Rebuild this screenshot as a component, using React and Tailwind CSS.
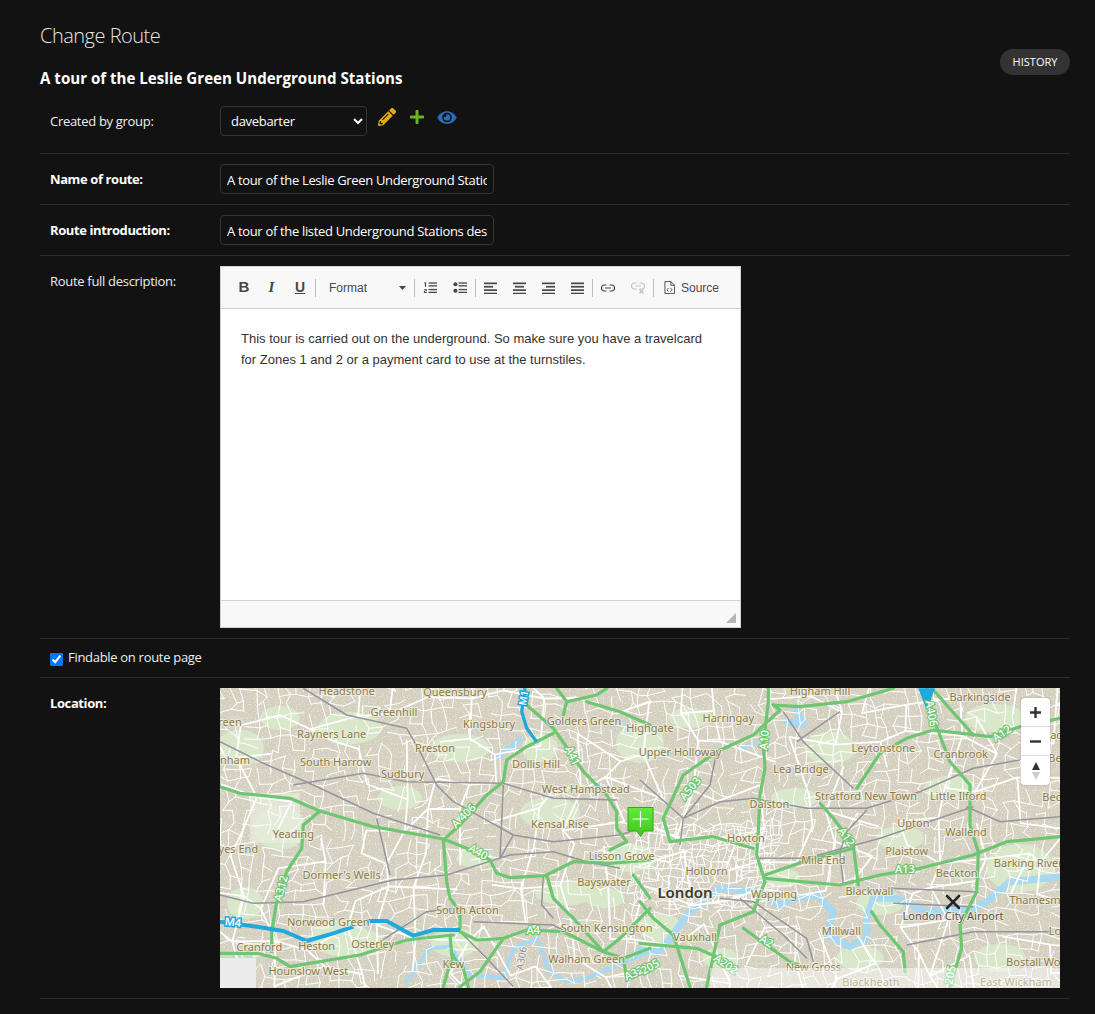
import { FaEye, FaPencilAlt, FaPlus } from "react-icons/fa";

const SANS = "font-['Open_Sans','Noto_Sans',sans-serif]";

// map points are measured in 3x crops, these bring them back to map pixels
const z3 = (pts) => pts.map(([x, y]) => `${(x / 3).toFixed(1)},${(y / 3 - 3).toFixed(1)}`).join(" ");
const z4 = (pts) => pts.map(([x, y]) => `${(x / 3 + 420).toFixed(1)},${(y / 3 - 3).toFixed(1)}`).join(" ");

const greenRoads = [
  z3([[0,305],[60,325],[210,340],[300,378],[460,425],[670,462],[740,490],[810,525],[830,565],[870,578],[975,572],[1060,530],[1170,535],[1290,525]]),
  z3([[300,378],[250,420],[245,490],[200,560],[170,650],[155,740],[155,800]]),
  z3([[1000,145],[920,185],[860,225],[850,290],[800,330],[720,420],[670,465],[680,590],[690,640],[720,680],[720,730]]),
  z3([[920,60],[1000,130],[1050,200],[1090,260],[1160,330],[1190,380],[1190,430],[1220,470],[1170,495]]),
  z3([[1010,10],[1040,50],[1130,30],[1160,10]]),
  z3([[1040,50],[1030,90]]),
  z3([[1100,50],[1200,80],[1290,120]]),
  z3([[720,740],[770,765],[850,760],[920,735],[1030,740],[1150,800],[1210,820]]),
  z3([[0,805],[110,805],[170,820],[210,845],[300,830],[420,810],[560,765],[700,750]]),
  z3([[690,750],[695,810],[730,850],[745,905]]),
  z3([[700,810],[680,870],[670,905]]),
  z3([[850,760],[780,860],[720,905]]),
  z3([[980,570],[1000,640],[1060,700],[1150,800],[1200,760],[1290,670]]),
  z3([[1240,570],[1290,640]]),
  z3([[1290,790],[1210,820],[1220,880],[1290,850]]),
  z4([[385,10],[385,50],[370,180],[375,250],[360,330],[355,440],[350,510],[375,590]]),
  z4([[400,60],[480,65],[620,50],[760,10]]),
  z4([[400,60],[420,75],[340,150],[230,200],[130,270],[70,400],[90,470],[220,455],[340,490]]),
  z4([[1260,100],[1140,125],[1050,155],[880,135],[800,160],[720,205],[650,310]]),
  z4([[860,10],[880,100],[930,230],[990,300],[990,420],[1015,500],[1010,620],[960,720],[965,790],[930,905]]),
  z4([[880,15],[1000,150]]),
  z4([[375,580],[600,600],[720,570],[840,550],[1000,510],[1100,470],[1260,455]]),
  z4([[540,355],[580,400],[640,480],[655,600]]),
  z4([[640,490],[490,530],[375,570]]),
  z4([[240,720],[340,680],[375,590]]),
  z4([[310,730],[450,830],[500,850]]),
  z4([[240,720],[200,905]]),
  z4([[0,650],[40,700],[100,750],[150,905]]),
  z4([[0,775],[170,790],[240,820]]),
  z4([[695,680],[720,720],[790,800],[795,860]]),
];

const railLines = [
  z3([[0,170],[120,230],[280,300],[460,385],[660,450]]),
  z3([[250,10],[380,90],[560,130],[600,200],[650,300],[700,350],[880,450]]),
  z3([[0,630],[100,655],[250,650],[520,585],[680,570],[870,510],[1000,500],[1100,530],[1200,550]]),
  z3([[220,300],[430,265],[560,290],[850,295],[1000,340],[1190,345]]),
  z3([[470,400],[510,570]]),
  z3([[880,450],[840,520],[850,300]]),
  z3([[480,770],[620,680],[700,670]]),
  z3([[720,740],[800,820],[880,905]]),
  z3([[760,710],[1000,720],[1150,800]]),
  z3([[970,570],[965,660],[1000,700]]),
  z3([[880,450],[1000,470],[1200,450],[1290,420]]),
  z4([[0,285],[130,400],[240,350],[340,340],[500,370],[680,370],[840,320],[1000,250],[1140,225]]),
  z4([[680,375],[620,440],[600,500],[610,600]]),
  z4([[980,365],[1080,410],[1260,395]]),
  z4([[1000,365],[720,460],[500,520],[350,520]]),
  z4([[430,80],[490,170],[640,310]]),
  z4([[470,170],[600,80]]),
  z4([[230,200],[210,300],[130,400],[120,480]]),
  z4([[240,640],[340,650],[500,760],[520,830]]),
  z4([[750,610],[1010,620]]),
  z4([[760,655],[1000,665]]),
  z4([[800,780],[1000,740],[1230,740]]),
  z4([[300,640],[430,750],[500,820]]),
];

const water = [
  [z4([[1270,575],[1110,590],[1040,650],[1000,672],[860,682],[770,640],[700,640],[680,700],[680,760],[630,785],[560,750],[580,680],[530,630],[470,640],[420,660],[340,620],[240,610],[150,680],[60,800],[0,795]]), 7],
  [z3([[1290,800],[1100,880],[1040,890],[990,860],[950,760],[880,790],[850,880],[750,870],[690,785],[630,790],[560,890]]), 4],
  [z3([[835,215],[900,165]]), 6],
  [z4([[440,110],[490,120],[470,75]]), 7],
  [z4([[310,190],[350,170]]), 4],
];

const parks = [
  [410, 170, 26, 14], [330, 125, 30, 16], [240, 60, 30, 14], [130, 40, 32, 16], [60, 140, 26, 22],
  [120, 250, 30, 18], [420, 55, 24, 20], [345, 205, 30, 12], [610, 60, 26, 16], [680, 150, 24, 12],
  [800, 180, 34, 24], [775, 30, 30, 14], [235, 255, 24, 14], [440, 240, 22, 14], [660, 215, 24, 12],
  [385, 210, 20, 10], [145, 255, 22, 12], [20, 60, 24, 18], [575, 110, 24, 10], [500, 270, 18, 10],
  [180, 110, 22, 12], [255, 170, 18, 10], [60, 30, 20, 12], [560, 190, 20, 10], [730, 100, 26, 12],
  [25, 215, 18, 16], [320, 60, 18, 14], [470, 30, 22, 10], [640, 270, 24, 12], [780, 270, 26, 14],
];

const places = [
  ...[
    ["Headstone",380,18],["Queensbury",705,22],["Greenhill",522,80],["Kingsbury",807,118],["Golders Green",1092,108],
    ["reen",30,110],["Rayners Lane",335,148],["Preston",645,188],["Dollis Hill",948,236],["nham",45,226],
    ["South Harrow",347,232],["Sudbury",548,266],["West Hampstead",1097,312],["Kensal Rise",1020,418],["Yeading",220,446],
    ["yes End",55,492],["Lisson Grove",1205,512],["Dormer's Wells",365,570],["Bayswater",1152,590],["South Acton",742,676],
    ["Norwood Green",325,712],["South Kensington",1160,728],["Cranford",118,785],["Heston",290,782],["Osterley",458,778],
    ["Kew",700,836],["Walham Green",1100,822],["Hounslow West",265,858],
  ].map(([t, x, y]) => [t, x / 3, y / 3 - 3]),
  ...[
    ["Higham Hill",540,18],["Barkingside",1020,36],["Harringay",265,100],["Highgate",30,130],["Upper Holloway",120,200],
    ["Leytonstone",730,188],["Cranbrook",962,207],["Lea Bridge",483,253],["Stratford New Town",678,332],["Little Ilford",955,333],
    ["Dalston",388,358],["Upton",820,413],["Wallend",978,441],["Hoxton",318,459],["Plaistow",800,497],["Barking River",1165,535],
    ["Mile End",550,524],["Holborn",200,557],["Beckton",950,565],["Blackwall",688,617],["Wapping",402,626],["Thamesm",1185,646],
    ["Vauxhall",165,756],["Millwall",604,738],["Lo",1245,738],["Bostall Wo",1180,830],["New Gross",520,846],
    ["Blackheath",693,892],["East Wickham",1128,890],["Bec",1235,335],["Be",1245,218],["ad",1250,150],
  ].map(([t, x, y]) => [t, x / 3 + 420, y / 3 - 3]),
];

const shields = [
  ["A 406",730,392,-45,0],["A40",775,500,30,0],["A312",182,610,-75,0],["A41",1058,212,65,0],["A4",940,735,0,0],["A320",1250,860,-25,0],
  ["A10",372,165,-85,1],["A503",150,310,-50,1],["A406",875,85,80,1],["A12",1085,145,-35,1],["A12",620,455,55,1],["A13",795,553,0,1],
  ["A2",380,768,30,1],["A202",258,837,35,1],["205",30,845,-30,1],["205",930,870,-80,1],
].map(([t, x, y, r, right]) => [t, right ? x / 3 + 420 : x / 3, y / 3 - 3, r]);

// fake street mesh: a wobbly grid with some edges dropped, seeded so every load is the same
function makeStreets() {
  let seed = 20240611;
  const rnd = () => {
    seed = (seed + 0x6d2b79f5) | 0;
    let t = Math.imul(seed ^ (seed >>> 15), 1 | seed);
    t = (t + Math.imul(t ^ (t >>> 7), 61 | t)) ^ t;
    return ((t ^ (t >>> 14)) >>> 0) / 4294967296;
  };
  const mesh = (x0, y0, cols, rows, cell, keep) => {
    const pts = [];
    for (let r = 0; r <= rows; r++) {
      for (let c = 0; c <= cols; c++) {
        const bx = x0 + c * cell;
        const by = y0 + r * cell;
        pts.push([
          bx + Math.sin(by / 47) * 6 + (rnd() - 0.5) * cell * 0.75,
          by + Math.sin(bx / 61) * 6 + (rnd() - 0.5) * cell * 0.75,
        ]);
      }
    }
    let d = "";
    const w = cols + 1;
    const seg = (a, b) => {
      d += `M${a[0].toFixed(1)} ${a[1].toFixed(1)}L${b[0].toFixed(1)} ${b[1].toFixed(1)}`;
    };
    for (let r = 0; r <= rows; r++) {
      for (let c = 0; c <= cols; c++) {
        const p = pts[r * w + c];
        if (c < cols && rnd() < keep) seg(p, pts[r * w + c + 1]);
        if (r < rows && rnd() < keep) seg(p, pts[(r + 1) * w + c]);
      }
    }
    return d;
  };
  return {
    main: mesh(-15, -15, 24, 9, 37, 0.55),
    wide: mesh(-10, -10, 79, 29, 11, 0.58),
    inner: mesh(415, 130, 22, 13, 6.5, 0.72),
  };
}
const streets = makeStreets();

function MapDrawing() {
  return (
    <svg width="840" height="300" viewBox="0 0 840 300" className="block" fontFamily="'Noto Sans',sans-serif">
      <defs>
        <filter id="speckle" x="0" y="0" width="100%" height="100%">
          <feTurbulence type="fractalNoise" baseFrequency="0.85" numOctaves="1" seed="4" />
          <feColorMatrix values="0 0 0 0 1  0 0 0 0 1  0 0 0 0 1  3.2 0 0 0 -1.7" />
        </filter>
        <linearGradient id="pinFill" x1="0" y1="0" x2="0" y2="1">
          <stop offset="0" stopColor="#62ea3c" />
          <stop offset="1" stopColor="#3fc61f" />
        </linearGradient>
      </defs>
      <rect width="840" height="300" fill="#d4cfbe" />
      <rect width="840" height="300" filter="url(#speckle)" opacity="0.7" />
      {parks.map(([cx, cy, rx, ry], i) => (
        <ellipse key={i} cx={cx} cy={cy} rx={rx} ry={ry} fill="#d9e8ca" />
      ))}
      <rect x="30" y="105" width="50" height="50" fill="#e9ecdf" opacity="0.7" />
      {water.map(([pts, w], i) => (
        <polyline key={i} points={pts} fill="none" stroke="#a8d9f0" strokeWidth={w} strokeLinejoin="round" strokeLinecap="round" />
      ))}
      <path d={streets.wide} fill="none" stroke="#ffffff" strokeWidth="1" strokeLinecap="round" />
      <path d={streets.main} fill="none" stroke="#ffffff" strokeWidth="1.8" strokeLinecap="round" />
      <path d={streets.inner} fill="none" stroke="#ffffff" strokeWidth="1" strokeLinecap="round" />
      <rect x="0" y="270" width="36" height="30" fill="#ececec" />
      {railLines.map((pts, i) => (
        <polyline key={i} points={pts} fill="none" stroke="#96949c" strokeWidth="1.5" strokeLinejoin="round" />
      ))}
      {greenRoads.map((pts, i) => (
        <polyline key={i} points={pts} fill="none" stroke="#6ec672" strokeWidth="3.2" strokeLinejoin="round" strokeLinecap="round" />
      ))}
      <polyline points={z3([[0,710],[90,722],[190,738],[260,768],[340,745],[400,725]])} fill="none" stroke="#1ea8dd" strokeWidth="4" strokeLinejoin="round" />
      <polyline points={z3([[440,708],[500,708],[580,752],[640,735],[720,735]])} fill="none" stroke="#1ea8dd" strokeWidth="4" strokeLinejoin="round" />
      <polyline points={z3([[915,10],[905,80],[920,130],[950,170]])} fill="none" stroke="#1ea8dd" strokeWidth="3.2" strokeLinejoin="round" />
      <polygon points={z4([[835,10],[885,10],[860,75]])} fill="#1ea8dd" />

      {places.map(([t, x, y]) => (
        <text key={t + x} x={x} y={y + 4} textAnchor="middle" fontSize="11" fill="#8b7a45" stroke="#f0eee4" strokeOpacity="0.75" strokeWidth="2" paintOrder="stroke">
          {t}
        </text>
      ))}
      {shields.map(([t, x, y, r], i) => (
        <text key={i} x={x} y={y + 4} transform={`rotate(${r} ${x} ${y})`} textAnchor="middle" fontSize="11" fontWeight="500" fill="#ffffff" stroke="#6ec672" strokeWidth="2.4" paintOrder="stroke">
          {t}
        </text>
      ))}
      <text x="305" y="271" transform="rotate(-80 305 271)" textAnchor="middle" fontSize="10" fill="#8c8c8c" stroke="#f0eee4" strokeWidth="2" paintOrder="stroke">A306</text>
      <text x="13" y="238" transform="rotate(5 13 234)" textAnchor="middle" fontSize="11" fontWeight="600" fill="#fff" stroke="#1ea8dd" strokeWidth="3" paintOrder="stroke">M4</text>
      <text x="304" y="13" transform="rotate(-80 304 10)" textAnchor="middle" fontSize="10" fontWeight="600" fill="#fff" stroke="#1ea8dd" strokeWidth="3" paintOrder="stroke">M1</text>

      <text x="465" y="210" textAnchor="middle" fontSize="15" fontWeight="600" fill="#3a3a30" stroke="#f0eee4" strokeOpacity="0.8" strokeWidth="2.4" paintOrder="stroke">London</text>
      <text x="733" y="232" textAnchor="middle" fontSize="11" fill="#55544e" stroke="#f0eee4" strokeOpacity="0.7" strokeWidth="2" paintOrder="stroke">London City Airport</text>

      {/* airport */}
      <g stroke="#23272b" strokeWidth="2.6" strokeLinecap="round">
        <line x1="727" y1="208" x2="739" y2="220" />
        <line x1="739" y1="208" x2="727" y2="220" />
      </g>

      {/* attribution fade */}
      <rect x="490" y="280" width="350" height="20" fill="#ffffff" opacity="0.45" />

      {/* route marker */}
      <path d="M408 119.5h25v23.5h-9l-3.5 5.5-3.5-5.5h-9z" fill="url(#pinFill)" stroke="#37a51f" strokeWidth="1" />
      <path d="M420.5 123v16M412.5 131h16" stroke="#ffffff" strokeWidth="1.2" />
    </svg>
  );
}

function MapControls() {
  return (
    <div className="absolute right-[10px] top-[10px] flex w-[29px] flex-col rounded-[4px] bg-white shadow-[0_0_2px_rgba(0,0,0,0.25)]">
      <div className="flex h-[29px] items-center justify-center border-b border-[#ddd]">
        <svg width="13" height="13" viewBox="0 0 13 13"><path d="M6.5 1v11M1 6.5h11" stroke="#333" strokeWidth="2.4" /></svg>
      </div>
      <div className="flex h-[29px] items-center justify-center border-b border-[#ddd]">
        <svg width="13" height="13" viewBox="0 0 13 13"><path d="M1 6.5h11" stroke="#333" strokeWidth="2.4" /></svg>
      </div>
      <div className="flex h-[29px] items-center justify-center">
        <svg width="10" height="20" viewBox="0 0 10 20">
          <path d="M5 1l4 8H1z" fill="#333" />
          <path d="M5 19l4-8H1z" fill="#ccc" />
        </svg>
      </div>
    </div>
  );
}

function Sep() {
  return <span className="h-[18px] w-px shrink-0 bg-[#bcbcbc]" />;
}

function Tool({ w, children }) {
  return <span className="flex shrink-0 items-center justify-center" style={{ width: w }}>{children}</span>;
}

function LinesIcon({ rows }) {
  return (
    <svg width="13" height="12" viewBox="0 0 13 12">
      {rows.map(([x1, x2], i) => (
        <rect key={i} x={x1} y={i * 3.4 + 0.5} width={x2 - x1} height="1.7" fill="#474747" />
      ))}
    </svg>
  );
}

function EditorToolbar() {
  return (
    <div className="flex h-[42px] items-center border-b border-[#d1d1d1] bg-[#f8f8f8] pl-[9px] font-['Liberation_Sans',sans-serif] text-[12px] text-[#484848]">
      <Tool w={28}><span className="text-[15px] font-bold text-[#474747]">B</span></Tool>
      <Tool w={27}><span className="font-['Liberation_Serif',serif] text-[15px] font-bold italic text-[#474747]">I</span></Tool>
      <Tool w={30}><span className="text-[14px] font-bold leading-[15px] text-[#474747] underline">U</span></Tool>
      <Sep />
      <span className="flex w-[98px] shrink-0 items-center justify-between pl-[13px] pr-[8px]">
        Format
        <svg width="7" height="4" viewBox="0 0 7 4"><path d="M0 0h7L3.5 4z" fill="#474747" /></svg>
      </span>
      <Sep />
      <Tool w={30}>
        <svg width="14" height="13" viewBox="0 0 15 13" fill="#474747">
          <rect x="6" y="1" width="9" height="1.4" /><rect x="6" y="4" width="9" height="1.4" />
          <rect x="6" y="8" width="9" height="1.4" /><rect x="6" y="11" width="9" height="1.4" />
          <path d="M2 1h1.3v4.6H2V2H1zM1 8h3v2.4H2.2v1H4v1H1v-2.4h1.8v-1H1z" />
        </svg>
      </Tool>
      <Tool w={30}>
        <svg width="14" height="13" viewBox="0 0 15 13" fill="#474747">
          <circle cx="2.6" cy="3" r="2.2" /><circle cx="2.6" cy="10" r="2.2" />
          <rect x="6" y="1" width="9" height="1.4" /><rect x="6" y="4" width="9" height="1.4" />
          <rect x="6" y="8" width="9" height="1.4" /><rect x="6" y="11" width="9" height="1.4" />
        </svg>
      </Tool>
      <Sep />
      <Tool w={29}><LinesIcon rows={[[0,13],[0,9],[0,13],[0,13]]} /></Tool>
      <Tool w={29}><LinesIcon rows={[[0,13],[2,11],[0,13],[0,13]]} /></Tool>
      <Tool w={29}><LinesIcon rows={[[0,13],[4,13],[0,13],[0,13]]} /></Tool>
      <Tool w={29}><LinesIcon rows={[[0,13],[0,13],[0,13],[0,13]]} /></Tool>
      <Sep />
      <Tool w={30}>
        <svg width="14" height="8" viewBox="0 0 14 8" fill="none" stroke="#474747" strokeWidth="1.2">
          <path d="M5.5 1H3.5a3 3 0 000 6h2M8.5 1h2a3 3 0 010 6h-2M4 4h6" />
        </svg>
      </Tool>
      <Tool w={30}>
        <svg width="14" height="12" viewBox="0 0 14 12" fill="none" stroke="#c4c4c4" strokeWidth="1.2">
          <path d="M5.5 1H3.5a3 3 0 000 6h2M8.5 1h2a3 3 0 010 6h-2M4 4h6" />
          <path d="M8.5 7.5l4 4M12.5 7.5l-4 4" stroke="#bdbdbd" />
        </svg>
      </Tool>
      <Sep />
      <span className="ml-[10px] flex items-center gap-[6px]">
        <svg width="11" height="13" viewBox="0 0 12 14" fill="none" stroke="#474747" strokeWidth="1">
          <path d="M1 .5h6.5l4 4v9h-10.5z" /><path d="M7.5.5v4h4" />
          <path d="M5 7.5L3.2 9.5 5 11.5M7 7.5l1.8 2-1.8 2" />
        </svg>
        Source
      </span>
    </div>
  );
}

function Editor() {
  return (
    <div className="w-[521px] border border-[#d1d1d1] bg-white">
      <EditorToolbar />
      <div className="h-[291px] px-[20px] pt-[19px] font-['Liberation_Sans',sans-serif] text-[13px] leading-[21px] text-[#333]">
        This tour is carried out on the underground. So make sure you have a travelcard for Zones 1 and 2 or a payment card to use at the turnstiles.
      </div>
      <div className="flex h-[27px] items-end justify-end border-t border-[#d1d1d1] bg-[#f8f8f8] p-[4px]">
        <svg width="10" height="10" viewBox="0 0 10 10"><path d="M10 0v10H0z" fill="#b5b5b5" /></svg>
      </div>
    </div>
  );
}

function Row({ label, strong, children, className = "pb-[10px]" }) {
  return (
    <div className={`flex items-start border-b border-[#2c2c2c] pl-[10px] pt-[10px] ${className}`}>
      <label className={`w-[170px] shrink-0 pt-[6px] text-[13px] leading-[18px] ${strong ? "font-bold tracking-[-0.4px] text-white" : "tracking-[-0.3px] text-[#eeeeee]"}`}>
        {label}
      </label>
      {children}
    </div>
  );
}

function TextField({ value }) {
  return (
    <input
      readOnly
      value={value}
      className="h-[30px] w-[274px] rounded-[4px] border border-[#353535] bg-[#121212] px-[6px] pt-[1px] text-[13px] tracking-[-0.33px] text-white outline-none"
    />
  );
}

export default function App() {
  return (
    <div className={`min-h-[1014px] bg-[#121212] pl-[40px] pr-[25px] pt-[22px] text-[13px] text-white ${SANS}`}>
      <div className="flex items-start justify-between">
        <div>
          <h1 className="text-[20px] font-light leading-[28px] tracking-[-0.5px] text-[#e5e5e5]">Change Route</h1>
          <h2 className="mt-[18px] text-[15.1px] font-bold leading-[20px] text-white">
            A tour of the Leslie Green Underground Stations
          </h2>
        </div>
        <a className="mt-[27px] flex h-[26px] w-[70px] items-center justify-center rounded-full bg-[#333333] text-[11px] font-normal text-white">
          HISTORY
        </a>
      </div>

      <div className="mt-[8px]">
        <Row label="Created by group:" className="pb-[17px]">
          <select className="h-[30px] w-[147px] rounded-[4px] border border-[#353535] bg-[#121212] pl-[6px] text-[13px] tracking-[-0.3px] text-white [color-scheme:dark]">
            <option>davebarter</option>
          </select>
          <div className="ml-[11px] mt-[2px] flex items-center">
            <FaPencilAlt className="h-[18px] w-[18px] text-[#e5a910]" />
            <FaPlus className="ml-[13px] h-[16px] w-[16px] text-[#6cb124]" />
            <FaEye className="ml-[12px] h-[17px] w-[20px] text-[#2a6cb8]" />
          </div>
        </Row>
        <Row label="Name of route:" strong>
          <TextField value="A tour of the Leslie Green Underground Stations" />
        </Row>
        <Row label="Route introduction:" strong>
          <TextField value="A tour of the listed Underground Stations designed by Leslie Green" />
        </Row>
        <Row label="Route full description:">
          <Editor />
        </Row>
        <div className="flex items-center border-b border-[#2c2c2c] pb-[11px] pl-[10px] pt-[10px]">
          <input type="checkbox" defaultChecked className="mt-[3px] h-[13px] w-[13px]" />
          <label className="ml-[5px] mt-[-1px] text-[13px] leading-[18px] tracking-[-0.3px] text-[#eeeeee]">Findable on route page</label>
        </div>
        <Row label="Location:" strong>
          <div className="relative h-[300px] w-[840px] overflow-hidden">
            <MapDrawing />
            <MapControls />
          </div>
        </Row>
      </div>
    </div>
  );
}
